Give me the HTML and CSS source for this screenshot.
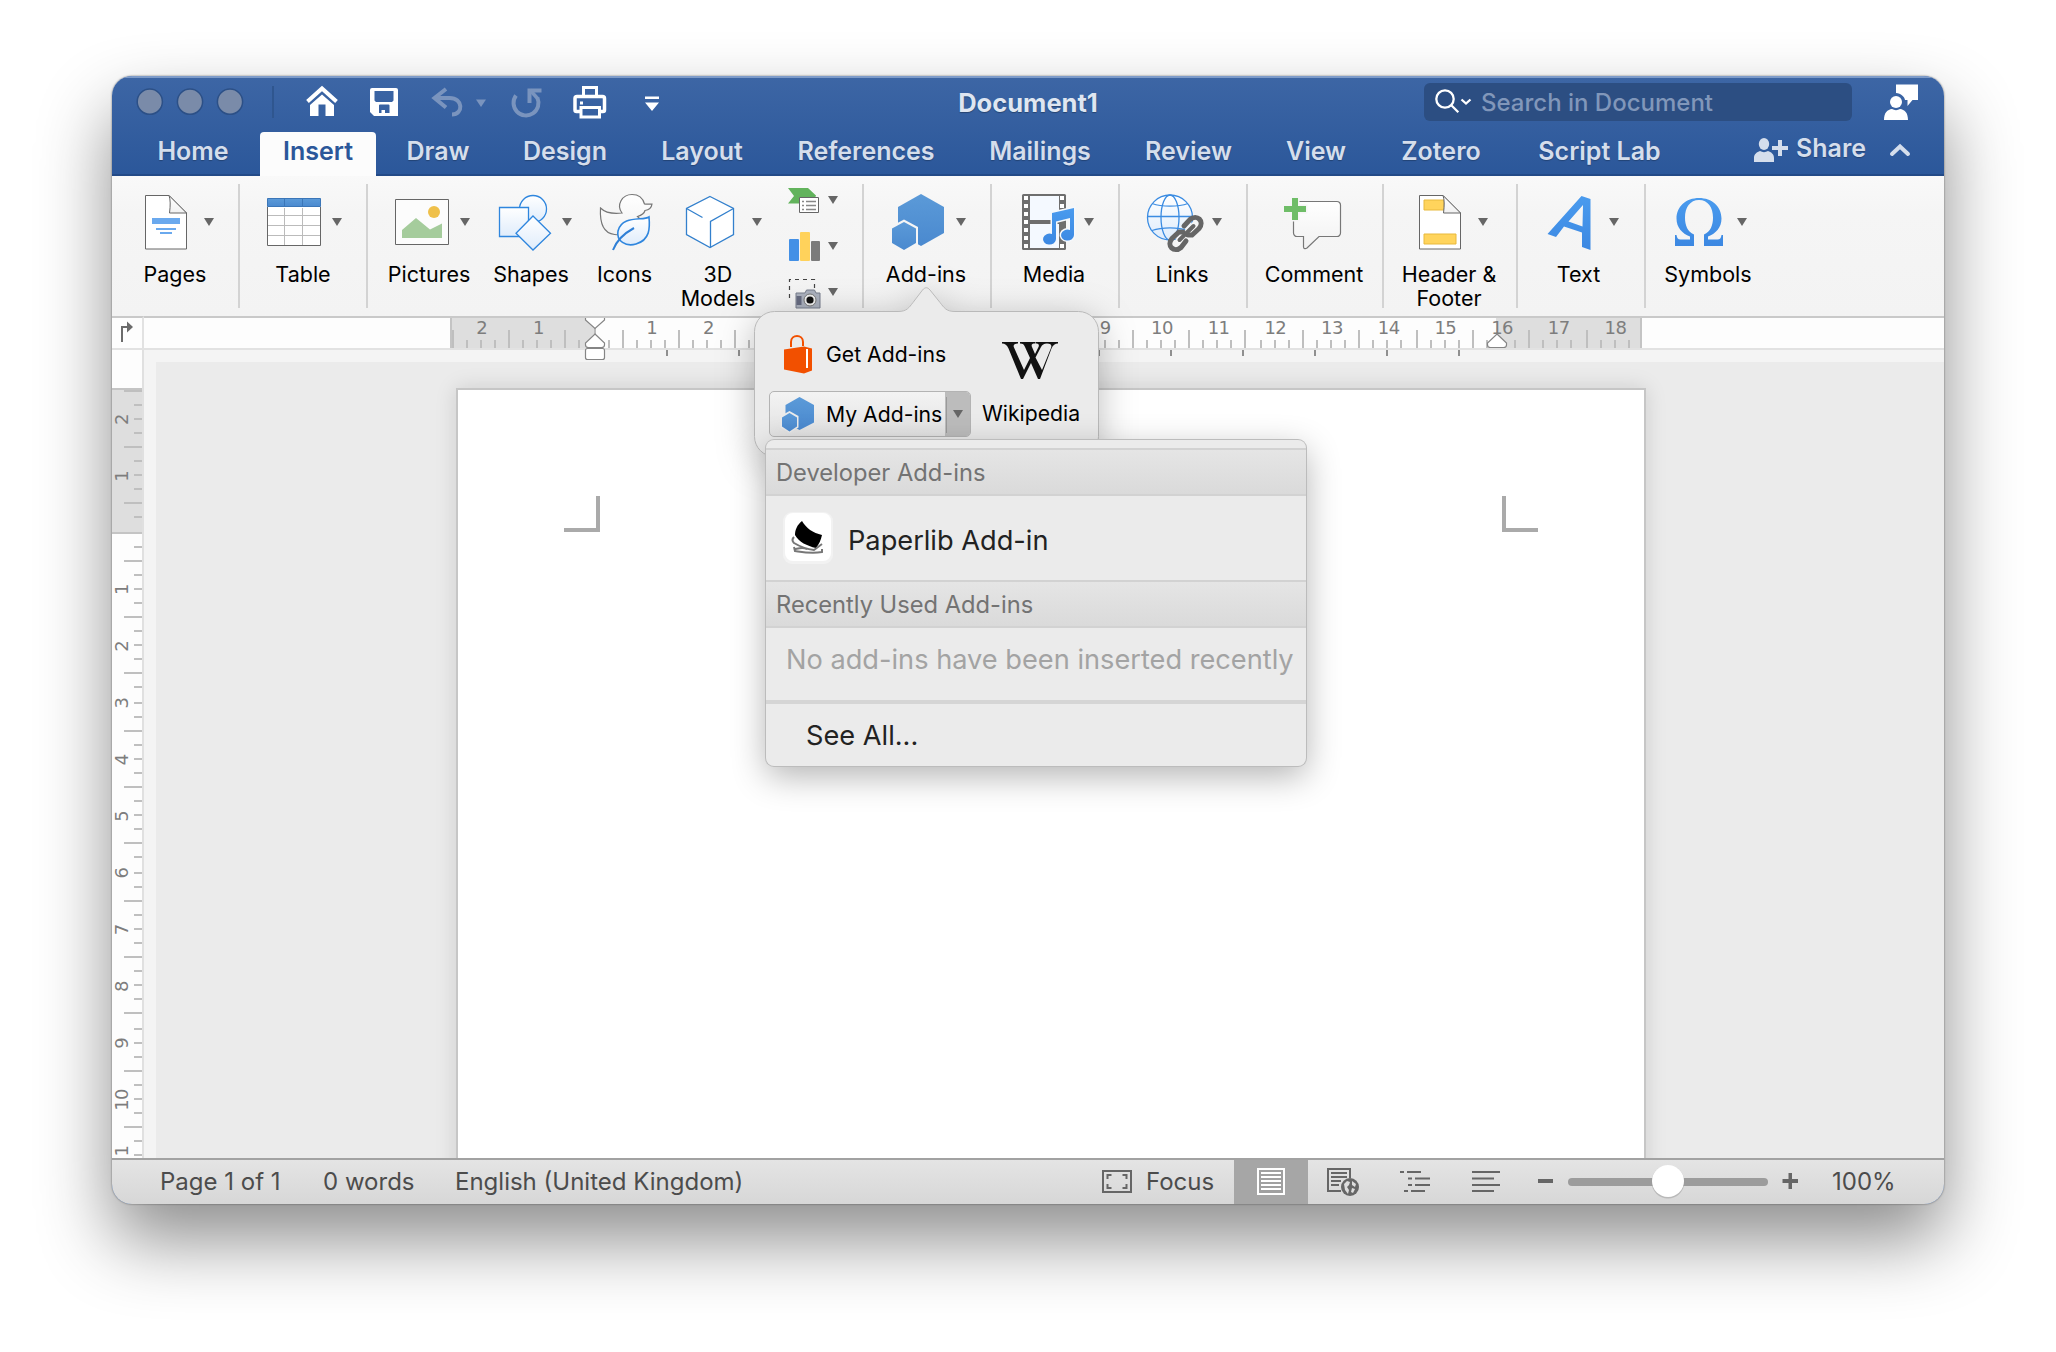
FILE: index.html
```html
<!DOCTYPE html>
<html lang="en">
<head>
<meta charset="utf-8">
<title>Document1</title>
<link rel="stylesheet" href="styles.css">
</head>
<body>
<svg class="defs" width="0" height="0">
  <defs>
    <linearGradient id="sky" x1="0" y1="0" x2="0" y2="1"><stop offset="0" stop-color="#fff"/><stop offset="1" stop-color="#dfecfb"/></linearGradient>
    <linearGradient id="paper" x1="0" y1="0" x2="0" y2="1"><stop offset="0" stop-color="#fff"/><stop offset="1" stop-color="#f1f1f1"/></linearGradient>
    <linearGradient id="blue" x1="0" y1="0" x2="0" y2="1"><stop offset="0" stop-color="#5b9ad8"/><stop offset="1" stop-color="#4a89cf"/></linearGradient>
    <linearGradient id="bright" x1="0" y1="0" x2="0" y2="1"><stop offset="0" stop-color="#4a9bee"/><stop offset="1" stop-color="#3c88e2"/></linearGradient>
  </defs>
</svg>

<div class="window">
  <header class="titlebar">
    <div class="quick">
      <svg width="178" height="52" viewBox="112 76 178 52"><g fill="#7a8ba9" stroke="#2c5087" stroke-width="1.5"><circle cx="149.8" cy="101.7" r="12.6"/><circle cx="190" cy="101.7" r="12.6"/><circle cx="230" cy="101.7" r="12.6"/></g><path d="M273 86v32" stroke="#2f568f" stroke-width="2"/></svg>
      <svg width="64" height="52" viewBox="290 76 64 52"><path d="M307.500 101.500 322 88.500l14.500 13" fill="none" stroke="#fff" stroke-width="4"/><path d="M310 105l12-10.500L334 105v11h-8.500v-11.500h-7V116H310z" fill="#fff"/></svg>
      <svg width="62" height="52" viewBox="354 76 62 52"><path fill="#fff" fill-rule="evenodd" d="M372 88h24a2 2 0 0 1 2 2v26h-24l-4-4V90a2 2 0 0 1 2-2zM374.500 91v9.500l1.500 1.500h16l1.500-1.500V91zM379 105.500V113h2.500v-3h3.500v3h4.500v-7.500a1 1 0 0 0-1-1h-8.500a1 1 0 0 0-1 1z"/></svg>
      <svg width="80" height="52" viewBox="416 76 80 52"><g fill="none" stroke="#7a94be" stroke-width="4"><path d="M446 89 434.500 98l11.500 9.500"/><path d="M435 98h14.500c14 0 14 16.500 2.500 16.500"/></g><path d="M476 99.500h10l-5 7.500z" fill="#7a94be"/></svg>
      <svg width="62" height="52" viewBox="496 76 62 52"><path d="M516 95.500A12.500 12.500 0 1 0 537.500 98" fill="none" stroke="#7a94be" stroke-width="4"/><path d="M529.500 103V90.500H541.500" fill="none" stroke="#7a94be" stroke-width="4"/><path d="M530 90l8 9" stroke="#7a94be" stroke-width="3.500"/></svg>
      <svg width="64" height="52" viewBox="558 76 64 52"><g fill="none" stroke="#fff" stroke-width="3"><path d="M583.500 96v-8.500h13V96"/><path d="M580 111.500h-3.500a1.500 1.500 0 0 1-1.500-1.500V98.500a2 2 0 0 1 2-2h25.500a2 2 0 0 1 2 2V110a1.500 1.500 0 0 1-1.500 1.500H600" stroke-width="3.500"/><path d="M581 107.500h18.500V117H581z"/></g><path d="M580 101.500h3v3h-3z" fill="#fff"/></svg>
      <svg width="60" height="52" viewBox="622 76 60 52"><path d="M645 96.500h14v2.500h-14zM645 102.500h14l-7 8.500z" fill="#fff"/></svg>
    </div>
    <h1 class="doc-title">Document1</h1>
    <div class="title-right">
      <div class="search">
        <svg width="57" height="38" viewBox="1424 83 57 38"><g fill="none" stroke="#fff" stroke-width="2.300"><circle cx="1445" cy="99" r="8.700"/><path d="M1451.300 105.300l7 7"/><path d="M1461.500 99.500l4.500 4 4.500-4"/></g></svg>
        <span>Search in Document</span>
      </div>
      <svg width="92" height="52" viewBox="1852 76 92 52"><g fill="#fff"><path d="M1896 84.500h22V100h-5.500l-5 6v-6h-2.500c-.5-3.500-4-6.500-9-7z"/><circle cx="1896" cy="102" r="6"/><path d="M1884 120c0-7.500 3.500-10.500 8-11 2.500 1.500 5.500 1.500 8 0 4.500.5 8 3.500 8 11z"/></g></svg>
    </div>
  </header>

  <nav class="tabs">
    <a class="tab">Home</a>
    <a class="tab active">Insert</a>
    <a class="tab">Draw</a>
    <a class="tab">Design</a>
    <a class="tab">Layout</a>
    <a class="tab">References</a>
    <a class="tab">Mailings</a>
    <a class="tab">Review</a>
    <a class="tab">View</a>
    <a class="tab">Zotero</a>
    <a class="tab">Script Lab</a>
    <div class="share">
      <svg width="37" height="28" viewBox="1752 137 37 28"><g fill="#d5deec"><ellipse cx="1764" cy="145" rx="5.200" ry="6"/><path d="M1754 163v-4c0-4 3-6 6-7 2.500 1.500 5.500 1.500 8 0 3 1 6 3 6 7v4z"/><path d="M1772 147h6v-6h4v6h6v4h-6v6h-4v-6h-6z"/></g></svg>
      <span>Share</span>
      <svg width="34" height="28" viewBox="1878 137 34 28"><path d="M1892 155l8-7.500 8 7.500" fill="none" stroke="#d5deec" stroke-width="4" stroke-linecap="round"/></svg>
    </div>
  </nav>

  <div class="ribbon">
    <section class="group">
      <div class="item w126">
        <svg width="126" height="76" viewBox="112 184 126 76"><path d="M145.500 195.500H169l17.500 17.500v36h-41z" fill="#fff" stroke="#666"/><path d="M169 195.500c1.500 4 1.500 10 .5 17.500h17z" fill="url(#paper)" stroke="#666"/><path d="M152 218h28v6h-28zM156 228h20v2h-20zM160 232h12v2h-12z" fill="#6aa9ee"/><path class="caret" d="M204 218h10l-5 8z"/></svg>
        <span>Pages</span>
      </div>
    </section>
    <section class="group">
      <div class="item w126">
        <svg width="126" height="76" viewBox="240 184 126 76"><path d="M267.500 207v38.500h53V207" fill="#fff" stroke="#666"/><path d="M284.500 208v37M302.500 208v37M268 215.500h52M268 225.500h52M268 235.500h52" stroke="#bbb"/><path d="M267.500 198.500h53v8h-53z" fill="url(#blue)" stroke="#3b76b8"/><path d="M284.500 199v7M302.500 199v7" stroke="#3b76b8"/><path class="caret" d="M332 218h10l-5 8z"/></svg>
        <span>Table</span>
      </div>
    </section>
    <section class="group">
      <div class="item w122">
        <svg width="122" height="76" viewBox="368 184 122 76"><path d="M395.500 199.500h53v45h-53z" fill="#fcfcfc" stroke="#666"/><path d="M402 230l14-12 14 11.500 12-6V238h-40z" fill="#a5cc9c"/><circle cx="434" cy="212" r="6" fill="#efc04a"/><path class="caret" d="M460 218h10l-5 8z"/></svg>
        <span>Pictures</span>
      </div>
      <div class="item w82">
        <svg width="82" height="76" viewBox="490 184 82 76"><g fill="url(#sky)" stroke="#2f86de" stroke-width="1.300"><circle cx="533" cy="209" r="13.500"/><path d="M499.500 207.500h29v29h-29z"/><path d="M533 216l17.500 17.200L533 250l-17-16.800z"/></g><path class="caret" d="M562 218h10l-5 8z"/></svg>
        <span>Shapes</span>
      </div>
      <div class="item w105">
        <svg width="105" height="76" viewBox="572 184 105 76"><path d="M600.500 208c5 5 13 6 21.500 5-6-8 0-18.500 10-18.500 7 0 11 4 12.500 9.500 2.500.5 5 0 7.500 0-.5 4-3 6-7 6.500-1 4-4 5-7.500 6l3 3-14 14c-3 1-4 2-12 1-9-1-15-9-14-26.500z" fill="url(#paper)" stroke="#777" stroke-width="1.200"/><path d="M649 217c-6 4-27-2-31 14-2 10 8 16 18 13 14-4 14-16 13-27z" fill="url(#sky)" stroke="#2f86de" stroke-width="1.600"/><path d="M613 250c3-8 10-16 21-22" fill="none" stroke="#2f7fd6" stroke-width="2"/></svg>
        <span>Icons</span>
      </div>
      <div class="item w82">
        <svg width="82" height="76" viewBox="677 184 82 76"><path d="M710 196.500l23.500 12v26L710 247.500l-23.500-13v-26z" fill="#fff" stroke="#3380cd" stroke-width="1.300"/><path d="M686.500 208.500l16 9M733.500 208.500l-23 13v26" fill="none" stroke="#3380cd" stroke-width="1.300"/><path class="caret" d="M752 218h10l-5 8z"/></svg>
        <span>3D<br>Models</span>
      </div>
      <div class="mini-stack">
        <svg width="102" height="46" viewBox="760 176 102 46"><path d="M788 188h20l8 7.500-3 8h-25l6-7.500z" fill="#62b35c"/><path d="M799.500 197.500h19v15h-19z" fill="#fff" stroke="#666"/><path d="M802 201.500h2M802 205.500h2M802 209.500h2M806 201.500h10M806 205.500h10M806 209.500h10" stroke="#888" stroke-width="1.500"/><path class="caret" d="M828 196h10l-5 8z"/></svg>
        <svg width="102" height="46" viewBox="760 222 102 46"><rect x="789" y="239" width="10" height="22" rx="1" fill="#4390e6"/><rect x="800" y="232" width="10" height="29" rx="1" fill="#ffd25b"/><rect x="811" y="241" width="9" height="20" rx="1" fill="#7b7b7b"/><path class="caret" d="M828 242h10l-5 8z"/></svg>
        <svg width="102" height="42" viewBox="760 268 102 42"><path d="M789.500 298v-18.500h25V292" fill="none" stroke="#444" stroke-width="1.200" stroke-dasharray="4 4"/><path d="M800 293h5l1.500-3h8l1.500 3h4v15h-24v-15z" fill="#aab0bd" stroke="#777d8b"/><path d="M796.500 296h5v9h-5z" fill="#666b80"/><circle cx="810" cy="300" r="6" fill="#eee" stroke="#777"/><circle cx="810" cy="300" r="3.600" fill="#111"/><path class="caret" d="M828 288h10l-5 8z"/></svg>
      </div>
    </section>
    <section class="group">
      <div class="item w126 nudge">
        <svg width="126" height="76" viewBox="864 184 126 76"><path d="M921 194l23 13v26l-23 13-23-13v-26z" fill="url(#blue)"/><path d="M904 219.500l14 7.500v18l-14 8-14-8v-18z" fill="#f5f5f5"/><path d="M904 222l12 6.500v14.500l-12 7-12-7v-14.500z" fill="url(#blue)"/><path class="caret" d="M956 218h10l-5 8z"/></svg>
        <span>Add-ins</span>
      </div>
    </section>
    <section class="group">
      <div class="item w126 nudge">
        <svg width="126" height="76" viewBox="992 184 126 76"><rect x="1022" y="194" width="44" height="56" rx="1.500" fill="#6e6e6e"/><path d="M1030 196h29v24h-29zM1030 224h29v24h-29z" fill="#f4f9ff"/><g fill="#fff"><path d="M1024 196h4v4h-4zM1024 204h4v4h-4zM1024 212h4v4h-4zM1024 220h4v4h-4zM1024 228h4v4h-4zM1024 236h4v4h-4zM1024 244h4v4h-4zM1060 196h4v4h-4zM1060 204h4v4h-4zM1060 244h4v4h-4z"/></g><g fill="url(#bright)" stroke="#f5f8fc" stroke-width="3" paint-order="stroke"><path d="M1052 213l22-5v27a6.500 5.500 0 1 1-4-5v-12l-14 3.500V239a6.500 5.500 0 1 1-4-5z"/></g><path class="caret" d="M1084 218h10l-5 8z"/></svg>
        <span>Media</span>
      </div>
    </section>
    <section class="group">
      <div class="item w126 nudge">
        <svg width="126" height="76" viewBox="1120 184 126 76"><g fill="none" stroke="#3b8ce2" stroke-width="1.300"><circle cx="1170" cy="217.500" r="22.500" fill="url(#sky)"/><ellipse cx="1170" cy="217.500" rx="9" ry="22.500"/><path d="M1147.500 216.500h45M1152 203.500c10 3.500 26 3.500 36 0M1152 230.500c10-3.500 26-3.500 36 0"/></g><g fill="none" stroke-linecap="round"><g stroke="#f6f6f6" stroke-width="9"><path d="M1180 241l15-15"/></g><g stroke="#666" stroke-width="5"><path d="M1184 226l6-6.500c7-6 15 2 9 9l-7 6.500h-4"/><path d="M1183 232h-4l-7 6.500c-6 7 2 15 9 9l5-6.500"/></g><path d="M1179.500 240l14-14" stroke="#666" stroke-width="4"/></g><path class="caret" d="M1212 218h10l-5 8z"/></svg>
        <span>Links</span>
      </div>
    </section>
    <section class="group">
      <div class="item w134 nudge">
        <svg width="134" height="76" viewBox="1248 184 134 76"><path d="M1297 201.500h40a3.500 3.500 0 0 1 3.500 3.500v28a3.500 3.500 0 0 1-3.500 3.500h-18l-12 11.500c-1.500 1-3.500 1-3.500-1v-10.500h-6.500a3.500 3.500 0 0 1-3.500-3.500v-28a3.500 3.500 0 0 1 3.500-3.500z" fill="url(#paper)" stroke="#777" stroke-width="1.200"/><path d="M1292 198h6v8h8v6h-8v8h-6v-8h-8v-6h8z" fill="#6fbd68" stroke="#f6f6f6" stroke-width="3" paint-order="stroke"/></svg>
        <span>Comment</span>
      </div>
    </section>
    <section class="group">
      <div class="item w132 nudge">
        <svg width="132" height="76" viewBox="1384 184 132 76"><path d="M1419.500 195.500H1443l17.500 17.500v36h-41z" fill="#fff" stroke="#666"/><path d="M1424 200h20v10h-20zM1424 234h32v10h-32z" fill="#ffd45c" stroke="#e8b93c"/><path d="M1443 195.500c1.500 4 1.500 10 .5 17.500h17z" fill="url(#paper)" stroke="#666"/><path class="caret" d="M1478 218h10l-5 8z"/></svg>
        <span>Header &amp;<br>Footer</span>
      </div>
    </section>
    <section class="group">
      <div class="item w126 nudge far">
        <svg width="126" height="76" viewBox="1518 184 126 76"><path fill="url(#bright)" fill-rule="evenodd" d="M1581.500 196l9 3v51l-8.500-3v-14.500l-18-6-8 10.500-8.500-3zM1583 205l-14.500 16.500 14 5z"/><path class="caret" d="M1609 218h10l-5 8z"/></svg>
        <span>Text</span>
      </div>
    </section>
    <section class="group last">
      <div class="item w126 nudge">
        <svg width="126" height="76" viewBox="1646 184 126 76"><path fill="url(#bright)" d="M1675 246v-11h1.500c.5 3 1.500 4.500 4 4.500h9.500v-3c-8-3-13.500-9-13.500-18 0-12 9.500-20.500 22.500-20.500s22.500 8.500 22.500 20.500c0 9-5.500 15-13.500 18v3h9.500c2.500 0 3.500-1.500 4-4.500h1.500v11h-19v-11.500c6.500-3 9-9 9-17 0-10-5-17.500-14-17.500s-14 7.500-14 17.500c0 8 2.500 14 9 17V246z"/><path class="caret" d="M1737 218h10l-5 8z"/></svg>
        <span>Symbols</span>
      </div>
    </section>
  </div>

  <div class="workspace">
    <div class="ruler-corner"><svg width="30" height="30" viewBox="112 318 30 30"><path d="M122 342v-15h7" fill="none" stroke="#6b6b6b" stroke-width="2"/><path d="M127 321.500l6 5.500-6 5.500z" fill="#6b6b6b"/></svg></div>
    <div class="ruler-h"><svg id="ruler-h" width="1800" height="30" viewBox="144 318 1800 30"></svg></div>
    <div class="ruler-v"><svg id="ruler-v" width="30" height="808" viewBox="112 350 30 808"></svg></div>
    <div class="canvas">
      <div class="desk">
        <div class="page"><i class="mark left"></i><i class="mark right"></i></div>
      </div>
    </div>
  </div>

  <footer class="statusbar">
    <span class="st-page">Page 1 of 1</span>
    <span class="st-words">0 words</span>
    <span class="st-lang">English (United Kingdom)</span>
    <svg class="push" width="46" height="44" viewBox="1100 1160 46 44"><path d="M1103 1171h28v21h-28z" fill="none" stroke="#666" stroke-width="2"/><path d="M1107.500 1179v-4h4M1122.500 1175h4v4M1126.500 1184v4h-4M1111.500 1188h-4v-4" fill="none" stroke="#666" stroke-width="2"/></svg>
    <span class="st-focus">Focus</span>
    <div class="view-active"><svg width="74" height="44" viewBox="1234 1160 74 44"><path d="M1258 1169h26v25h-26z" fill="#a0a0a0" stroke="#fff" stroke-width="2"/><path d="M1261 1173h20M1261 1177h20M1261 1181h20M1261 1185h20M1261 1189h20" stroke="#fff" stroke-width="2"/></svg></div>
    <svg width="72" height="44" viewBox="1308 1160 72 44"><path d="M1341 1191h-13v-22h22v9" fill="none" stroke="#666" stroke-width="2"/><path d="M1331 1173h16M1331 1177h16M1331 1181h10M1331 1185h8" stroke="#666" stroke-width="2"/><circle cx="1350" cy="1187" r="9" fill="#666"/><path d="M1344 1184l3-3 3 1-1 3-2 2 2 3-1 4-3-4zM1352 1181l4 3-1 3-3-2zM1352 1188l3 1-2 4-2-1z" fill="#ddd"/></svg>
    <svg width="72" height="44" viewBox="1380 1160 72 44"><path d="M1400 1172h4M1407 1172h14M1408 1178.500h4M1415 1178.500h15M1408 1185h4M1415 1185h15M1404 1191h4M1411 1191h14" stroke="#666" stroke-width="2"/></svg>
    <svg width="72" height="44" viewBox="1452 1160 72 44"><path d="M1472 1172h28M1472 1178.500h22M1472 1185h28M1472 1191h22" stroke="#666" stroke-width="2"/></svg>
    <svg width="308" height="44" viewBox="1524 1160 308 44"><path d="M1538 1179h15v4h-15zM1782.500 1179h6v-6h3.500v6h6v4h-6v6h-3.500v-6h-6z" fill="#666"/><rect x="1568" y="1178" width="200" height="8" rx="4" fill="#9c9c9c"/><circle cx="1668" cy="1182" r="16.500" fill="#999" opacity=".5"/><circle cx="1668" cy="1181" r="16" fill="#fff"/></svg>
    <span class="st-zoom">100%</span>
  </footer>
</div>

<div class="popover">
  <svg class="pop-shape" width="345" height="170" viewBox="754 287 345 170"><path d="M774.500 311.500H898c9 0 11-4 15-9l9.500-12.500c2.500-3 5-3 7.500 0l10 12.500c4 5 6 9 15 9h123.500a20 20 0 0 1 20 20v105a20 20 0 0 1-20 20H774.500a20 20 0 0 1-20-20v-105a20 20 0 0 1 20-20z" fill="#ebebeb" stroke="#b9b9b9"/></svg>
  <div class="pop-body">
    <div class="pop-col">
      <div class="get">
        <svg width="57" height="60" viewBox="769 323 57 60"><path d="M791 346v-5c0-8 12-8 12 0v4" fill="none" stroke="#f25000" stroke-width="2"/><path d="M784 348.500l20-3 8 2v22l-8 3-20-4z" fill="#f25000"/><path d="M807 348v19" stroke="#fff" stroke-width="2"/></svg>
        <span>Get Add-ins</span>
      </div>
      <div class="mine">
        <svg width="56" height="44" viewBox="770 392 56 44"><path d="M799.500 397l14.500 8v17.500l-14.500 7.500-14-7.500V405z" fill="url(#blue)"/><path d="M789.500 411l9 5v11.500l-9 5.500-9-5.500V416z" fill="#ebebeb"/><path d="M789.500 413l7.500 4.500v9l-7.500 5-7.500-5v-9z" fill="url(#blue)"/></svg>
        <span>My Add-ins</span>
        <b><svg width="25" height="44" viewBox="946 392 25 44"><path d="M947.500 397v36" stroke="#9a9a9a"/><path class="caret" d="M954 410h10l-5 8z"/></svg></b>
      </div>
    </div>
    <div class="wiki">
      <svg width="56" height="38" viewBox="0 0 56 38"><path d="M0 0h16v1.500c-4 0-5 1.500-4 4L22 28l6-12-5-11c-1-2.500-2-3.500-5-3.500V0h15v1.500c-3 0-4 1-3 3.500l3 7 3.500-7c1-2.500 0-3.500-3-3.500V0h11.500v1.500c-3 0-5 1.500-6 3.500l-5.500 10.500L40 28 49 6c1-3 0-4.500-4-4.500V0h11v1.500c-3 0-5 1.500-6.500 5L38 37h-2l-7-16-8 16h-2L6.500 6.500C5 3 3 1.500 0 1.500z" fill="#111"/></svg>
      <span>Wikipedia</span>
    </div>
  </div>
</div>

<div class="menu">
  <div class="menu-head">Developer Add-ins</div>
  <div class="menu-row addin">
    <svg width="50" height="52" viewBox="783 512 50 52"><rect x="783" y="512" width="50" height="52" rx="9" fill="#f2f2f2"/><rect x="785" y="513" width="46" height="48" rx="8" fill="#fff"/><path d="M802 521c4 7 11 12 20 14-1 5-3 9-6 13-9-2-17-6-21-13 0-5 2-10 7-14z" fill="#000"/><path d="M794 537c-2 2-2 4 0 6 5 3 11 6 20 7l8-6M794 547l1 4c7 1 16 3 27 1v-3M795 549c5-1 8-2 12 0" fill="none" stroke="#777" stroke-width="2"/></svg>
    <span>Paperlib Add-in</span>
  </div>
  <div class="menu-head">Recently Used Add-ins</div>
  <div class="menu-row empty">No add-ins have been inserted recently</div>
  <div class="menu-row all">See All...</div>
</div>
<script src="ruler.js"></script>
</body>
</html>
```
FILE: styles.css
```css
* { box-sizing: border-box; }
body {
  margin: 0;
  padding: 76px 112px;
  height: 1352px;
  overflow: hidden;
  background: #fff;
  font-family: Inter, "Liberation Sans", sans-serif;
}
svg { display: block; flex: none; overflow: visible; }
.defs { position: absolute; }
.window {
  width: 1832px;
  height: 1128px;
  display: flex;
  flex-direction: column;
  border-radius: 20px;
  overflow: hidden;
  box-shadow: 0 0 2px rgba(0,0,0,.55), 0 36px 72px rgba(0,0,0,.45);
  background: linear-gradient(#3d66a5, #2b579a 100px);
}

/* title bar */
.titlebar { height: 52px; display: grid; grid-template-columns: 1fr auto 1fr; align-items: center; box-shadow: inset 0 2px #7d9bc9; flex: none; }
.quick { display: flex; }
.doc-title { margin: 0; padding-top: 1px; font-size: 25.500px; font-weight: 700; color: #dfe6f1; text-shadow: 0 1px 1px rgba(0,0,0,.3); }
.title-right { display: flex; justify-content: flex-end; align-items: center; }
.search { width: 428px; height: 38px; border-radius: 6px; background: #2c4e82; display: flex; align-items: center; font-size: 24px; font-weight: 500; color: #8197ba; }
.search span { padding-top: 1px; }

.tabs { height: 48px; flex: none; display: grid; grid-template-columns: 126px 124px 116px 138px 136px 192px 156px 141px 114px 136px 181px 1fr; padding-left: 18px; box-shadow: inset 0 -2px #234a87; }
.tab { display: flex; align-items: center; justify-content: center; font-size: 25px; font-weight: 600; color: #d5deec; text-shadow: 0 1px 1px rgba(0,0,0,.25); padding-bottom: 2px; }
.tab.active { margin: 4px 4px 0; padding-bottom: 6px; background: #fcfcfc; color: #2b579a; border-radius: 4px 4px 0 0; text-shadow: none; }
.share { display: flex; align-items: center; justify-content: flex-end; padding: 0 32px 5px 0; color: #d5deec; font-size: 25px; font-weight: 600; text-shadow: 0 1px 1px rgba(0,0,0,.25); }
.share span { width: 89px; padding: 0 0 3px 7px; }

/* ribbon */
.ribbon { height: 140px; flex: none; display: flex; background: linear-gradient(#f9f9f9, #f5f5f5 36px, #f3f3f3); padding: 8px 0; }
.group { display: flex; height: 124px; border-right: 2px solid #d3d3d3; }
.group.last { border: 0; }
.item { display: flex; flex-direction: column; align-items: center; font-size: 21.500px; line-height: 24px; text-align: center; color: #000; }
.item span { margin-top: 2px; white-space: nowrap; }
.nudge span { margin-left: -2px; }
.far span { margin-left: -5px; }
.w126 { width: 126px; }
.w122 { width: 122px; }
.w82 { width: 82px; }
.w105 { width: 105px; }
.w134 { width: 134px; }
.w132 { width: 132px; }
.mini-stack { width: 103px; display: flex; flex-direction: column; align-items: flex-end; margin-top: -8px; }
.caret { fill: #666; }

/* rulers and page */
.workspace { height: 842px; flex: none; display: grid; grid-template-columns: 32px 1fr; grid-template-rows: 34px 808px; background: #f4f4f4; }
.ruler-corner, .ruler-h { background: #fdfdfd; border-top: 2px solid #c9c9c9; border-bottom: 2px solid #e2e2e2; }
.ruler-corner { border-right: 2px solid #e2e2e2; }
.ruler-v { background: #fdfdfd; border-right: 2px solid #e0e0e0; overflow: hidden; }
.ruler-v svg { overflow: hidden; }
.num { font: 18px "DejaVu Sans", sans-serif; fill: #7d7d7d; text-anchor: middle; letter-spacing: -.6px; }
.canvas { padding: 12px 0 0 12px; }
.desk { height: 796px; background: #ebebeb; padding: 26px 0 0 300px; overflow: hidden; }
.page { width: 1190px; height: 900px; background: #fff; border: 2px solid #c6c6c6; box-shadow: 0 0 20px rgba(0,0,0,.13); display: flex; justify-content: space-between; padding: 106px; }
.mark { width: 36px; height: 36px; border: solid #aaa; }
.mark.left { border-width: 0 4px 4px 0; }
.mark.right { border-width: 0 0 4px 4px; }

/* status bar */
.statusbar { height: 46px; flex: none; border-top: 2px solid #a2a2a2; background: linear-gradient(#e4e4e4, #d7d7d7); display: flex; align-items: center; font-size: 24px; color: #4c4c4c; padding-left: 48px; white-space: nowrap; }
.statusbar span { padding-bottom: 1px; }
.st-page { width: 163px; }
.st-words { width: 132px; }
.push { margin-left: auto; }
.st-focus { width: 88px; }
.view-active { background: #a6a6a6; }
.st-zoom { width: 112px; }

/* popover */
.popover { position: absolute; z-index: 2; left: 754px; top: 287px; width: 345px; height: 170px; font-size: 21.200px; color: #000; }
.pop-shape { position: absolute; left: 0; top: 0; filter: drop-shadow(0 8px 18px rgba(0,0,0,.26)); }
.pop-body { position: relative; display: flex; padding: 38px 0 0 15px; white-space: nowrap; }
.get { display: flex; align-items: center; height: 60px; margin-top: -1px; }
.mine { width: 202px; height: 46px; margin-top: 7px; display: flex; align-items: center; border: 1px solid #b3b3b3; border-radius: 5px; background: linear-gradient(#f3f3f3, #e2e2e2); overflow: hidden; }
.mine span { width: 120px; }
.mine b { background: #bcbcbc; }
.wiki { width: 120px; display: flex; flex-direction: column; align-items: center; gap: 20px; padding: 17px 0 0 0; }
.wiki svg { margin-left: -2px; }

/* add-in menu */
.menu { position: absolute; z-index: 3; left: 766px; top: 440px; width: 540px; height: 326px; padding-top: 8px; border-radius: 8px; background: #ebebeb; box-shadow: 0 0 0 1px #bcbcbc, 0 10px 34px rgba(0,0,0,.3); white-space: nowrap; }
.menu-head { height: 48px; border: solid #d2d2d2; border-width: 2px 0; background: linear-gradient(#e5e5e5, #dadada); padding-left: 10px; line-height: 45px; font-size: 23.700px; color: #737373; }
.menu-row { display: flex; align-items: center; font-size: 27.200px; color: #222; }
.addin { height: 84px; padding: 0 0 0 17px; gap: 15px; }
.addin span { padding-top: 4px; }
.empty { height: 76px; padding: 0 0 9px 20px; color: #a3a3a3; border-bottom: 4px solid #d5d5d5; }
.all { height: 62px; padding-left: 40px; }
```
FILE: ruler.js
```js
const UNIT = 56.69;
const snap = v => Math.round(v / 2) * 2 - 1;

function horizontal() {
  const zero = 595;
  let s = '<rect x="450" y="318" width="145" height="30" fill="#dedede"/><rect x="450" y="318" width="2" height="30" fill="#c4c4c4"/>'
        + '<rect x="1496" y="318" width="145" height="30" fill="#dedede"/><rect x="1640" y="318" width="2" height="30" fill="#c4c4c4"/>';
  for (let q = -10; q <= 73; q++) {
    if (q === 0 || q === 64) continue;
    const x = snap(zero + q * UNIT / 4);
    const half = Math.abs(q) % 4 === 2;
    s += `<rect x="${x - 1}" y="${half ? 330 : 340}" width="2" height="${half ? 18 : 8}" fill="#bfbfbf"/>`;
  }
  for (let n = -2; n <= 18; n++) {
    if (n) s += `<text class="num" x="${zero + n * UNIT}" y="334">${Math.abs(n)}</text>`;
  }
  for (let x = 667; x < 1460; x += 72) s += `<rect x="${x - 1}" y="350" width="2" height="6" fill="#8f8f8f"/>`;
  const drop = 'fill="#fff" stroke="#858585" stroke-width="1.2"';
  s += '<path d="M595 327v8" stroke="#bbb" stroke-width="2"/>'
     + `<path d="M585.500 318v2l9.500 8.500 9.500-8.500v-2" ${drop}/>`
     + `<path d="M595 334l9.500 9v2q0 2.500-3 2.500h-13q-3 0-3-2.500v-2z" ${drop}/>`
     + `<rect x="585.500" y="348.500" width="19" height="11" rx="2" ${drop}/>`
     + `<path d="M1497 334l9.500 9v2q0 2.500-3 2.500h-13q-3 0-3-2.500v-2z" ${drop}/>`;
  document.getElementById('ruler-h').innerHTML = s;
}

function vertical() {
  const zero = 533;
  let s = '<rect x="112" y="388" width="30" height="145" fill="#dedede"/>'
        + '<rect x="112" y="388" width="30" height="2" fill="#c4c4c4"/><rect x="112" y="532" width="30" height="2" fill="#c4c4c4"/>';
  for (let q = -10; q <= 44; q++) {
    if (q === 0) continue;
    const y = snap(zero + q * UNIT / 4);
    const half = Math.abs(q) % 4 === 2;
    s += `<rect x="${half ? 124 : 134}" y="${y - 1}" width="${half ? 18 : 8}" height="2" fill="#bfbfbf"/>`;
  }
  for (let n = -2; n <= 10; n++) {
    if (n) s += `<text class="num" transform="translate(128 ${zero + n * UNIT}) rotate(-90)">${Math.abs(n)}</text>`;
  }
  s += '<text class="num" transform="translate(128 1151) rotate(-90)">1</text>';
  document.getElementById('ruler-v').innerHTML = s;
}

horizontal();
vertical();
```
